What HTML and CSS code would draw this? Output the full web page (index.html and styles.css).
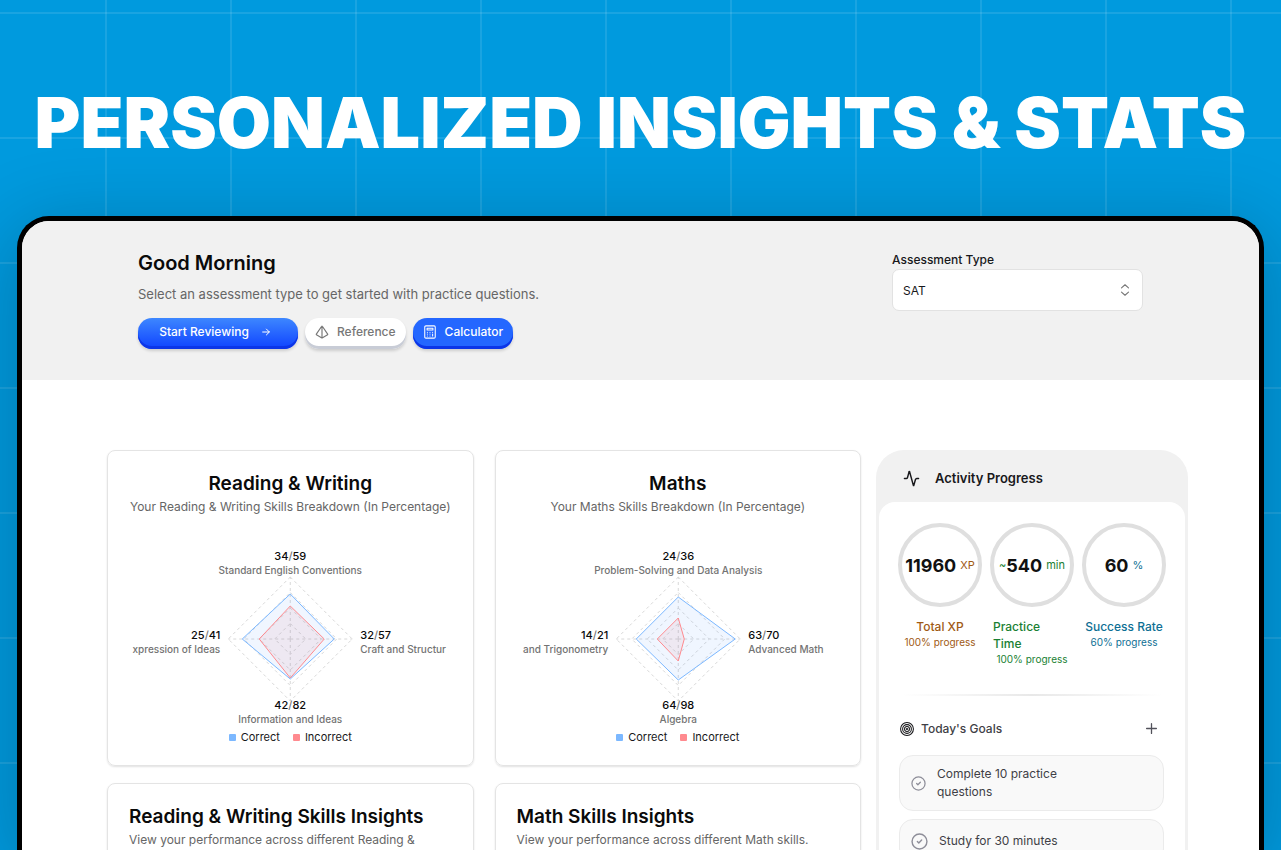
FILE: index.html
```html
<!DOCTYPE html>
<html lang="en">
<head>
<meta charset="utf-8">
<meta name="viewport" content="width=device-width, initial-scale=1">
<title>Personalized Insights &amp; Stats</title>
<link rel="stylesheet" href="styles.css">
</head>
<body>
<div class="page">
  <h1 class="hero">PERSONALIZED INSIGHTS &amp; STATS</h1>
  <main class="device">
    <header class="welcome">
      <div class="welcome-text">
        <h2 class="greeting">Good Morning</h2>
        <p class="lead">Select an assessment type to get started with practice questions.</p>
        <div class="actions">
          <button class="btn btn-start" type="button">Start Reviewing
            <svg class="icon-arrow" viewBox="0 0 24 24" fill="none" stroke="currentColor" stroke-width="2.4" stroke-linecap="round" stroke-linejoin="round"><path d="M4 12h16M13 5l7 7-7 7"/></svg>
          </button>
          <button class="btn btn-reference" type="button">
            <svg class="icon-btn" viewBox="0 0 24 24" fill="none" stroke="currentColor" stroke-width="2" stroke-linecap="round" stroke-linejoin="round"><path d="M2.5 16.9a1 1 0 0 1-.2-1.3l8.9-13a1 1 0 0 1 1.6 0l8.9 13a1 1 0 0 1-.2 1.3l-8.6 4.8a2 2 0 0 1-1.8 0zM12 2v20"/></svg>
            Reference</button>
          <button class="btn btn-calculator" type="button">
            <svg class="icon-btn" viewBox="0 0 24 24" fill="none" stroke="currentColor" stroke-width="1.8" stroke-linecap="round" stroke-linejoin="round"><rect x="3" y="1.500" width="18" height="21" rx="2"/><path d="M7 5.500h10v3H7zM7.500 12.500v.1M12 12.500v.1M16.500 12.500v.1M7.500 15.500v.1M12 15.500v.1M7.500 18.800v.1M12 18.800v.1M16.500 15.500v3.400"/></svg>
            Calculator</button>
        </div>
      </div>
      <div class="field">
        <label class="field-label" for="assessment">Assessment Type</label>
        <div class="select-wrap">
          <select class="select" id="assessment"><option>SAT</option></select>
          <svg class="select-icon" viewBox="0 0 16 16" fill="none" stroke="currentColor" stroke-width="1.3" stroke-linecap="round" stroke-linejoin="round"><path d="M4 5.500 8 2l4 3.500M4 10.500 8 14l4-3.500"/></svg>
        </div>
      </div>
    </header>

    <div class="content">
      <div class="cards">
        <section class="card card-chart">
          <h3 class="card-title">Reading &amp; Writing</h3>
          <p class="card-sub">Your Reading &amp; Writing Skills Breakdown (In Percentage)</p>
          <svg class="radar" viewBox="0 0 322 180" role="img" aria-label="Reading and Writing skills">
            <g class="grid"><path d="M161 32l62 62-62 62-62-62zM161 47.500l46.500 46.500-46.500 46.500-46.500-46.500zM161 63l31 31-31 31-31-31zM161 78.500l15.500 15.500-15.500 15.500-15.500-15.500zM161 94v-62M161 94h62M161 94v62M161 94h-62"/></g>
            <path class="area-correct" d="M161 49 205 94 161 134 113 94z"/>
            <path class="area-incorrect" d="M161 61 195 94 161 133 130 94z"/>
            <g text-anchor="middle">
              <text class="score" x="161" y="15">34<tspan class="slash">/</tspan>59</text><text class="skill" x="161" y="29">Standard English Conventions</text>
              <text class="score" x="161" y="164">42<tspan class="slash">/</tspan>82</text><text class="skill" x="161" y="178">Information and Ideas</text>
            </g>
            <g text-anchor="end"><text class="score" x="91" y="94">25<tspan class="slash">/</tspan>41</text><text class="skill" x="91" y="108">xpression of Ideas</text></g>
            <g><text class="score" x="231" y="94">32<tspan class="slash">/</tspan>57</text><text class="skill" x="231" y="108">Craft and Structur</text></g>
          </svg>
          <div class="legend"><span class="key key-correct">Correct</span><span class="key key-incorrect">Incorrect</span></div>
        </section>

        <section class="card card-chart">
          <h3 class="card-title">Maths</h3>
          <p class="card-sub">Your Maths Skills Breakdown (In Percentage)</p>
          <svg class="radar" viewBox="0 0 322 180" role="img" aria-label="Maths skills">
            <g class="grid"><path d="M161 32l62 62-62 62-62-62zM161 47.500l46.500 46.500-46.500 46.500-46.500-46.500zM161 63l31 31-31 31-31-31zM161 78.500l15.500 15.500-15.500 15.500-15.500-15.500zM161 94v-62M161 94h62M161 94v62M161 94h-62"/></g>
            <path class="area-correct" d="M161 52 218 94 161 135 119 94z"/>
            <path class="area-incorrect" d="M161 73 167 94 161 116 140 94z"/>
            <g text-anchor="middle">
              <text class="score" x="161" y="15">24<tspan class="slash">/</tspan>36</text><text class="skill" x="161" y="29">Problem-Solving and Data Analysis</text>
              <text class="score" x="161" y="164">64<tspan class="slash">/</tspan>98</text><text class="skill" x="161" y="178">Algebra</text>
            </g>
            <g text-anchor="end"><text class="score" x="91" y="94">14<tspan class="slash">/</tspan>21</text><text class="skill" x="91" y="108">and Trigonometry</text></g>
            <g><text class="score" x="231" y="94">63<tspan class="slash">/</tspan>70</text><text class="skill" x="231" y="108">Advanced Math</text></g>
          </svg>
          <div class="legend"><span class="key key-correct">Correct</span><span class="key key-incorrect">Incorrect</span></div>
        </section>

        <section class="card">
          <h3 class="card-title">Reading &amp; Writing Skills Insights</h3>
          <p class="card-sub">View your performance across different Reading &amp;</p>
        </section>
        <section class="card">
          <h3 class="card-title">Math Skills Insights</h3>
          <p class="card-sub">View your performance across different Math skills.</p>
        </section>
      </div>

      <aside class="activity">
        <h3 class="activity-title">
          <svg class="icon-activity" viewBox="0 0 24 24" fill="none" stroke="currentColor" stroke-width="2" stroke-linecap="round" stroke-linejoin="round"><path d="M22 12h-2.500a2 2 0 0 0-1.900 1.500l-2.400 8.300a.25.25 0 0 1-.5 0L9.200 2.200a.25.25 0 0 0-.5 0L6.400 10.500A2 2 0 0 1 4.500 12H2"/></svg>
          Activity Progress</h3>
        <div class="activity-body">
          <div class="stats">
            <div class="stat stat-xp"><div class="ring"><b class="value">11960</b><span class="unit">XP</span></div><span class="stat-name">Total XP</span><span class="stat-progress">100% progress</span></div>
            <div class="stat stat-time"><div class="ring"><span>~</span><b class="value">540</b><span class="unit">min</span></div><span class="stat-name">Practice Time</span><span class="stat-progress">100% progress</span></div>
            <div class="stat stat-rate"><div class="ring"><b class="value">60</b><span class="unit">%</span></div><span class="stat-name">Success Rate</span><span class="stat-progress">60% progress</span></div>
          </div>
          <hr class="divider">
          <div class="goals-head">
            <svg class="icon-target" viewBox="0 0 24 24" fill="none" stroke="currentColor" stroke-width="1.800"><circle cx="12" cy="12" r="11"/><circle cx="12" cy="12" r="7.500"/><circle cx="12" cy="12" r="4.200"/><circle cx="12" cy="12" r="1"/></svg>
            <h4 class="goals-title">Today's Goals</h4>
            <button class="add" type="button" aria-label="Add goal"><svg class="icon-plus" viewBox="0 0 12 12" fill="none" stroke="currentColor" stroke-width="1.200" stroke-linecap="round"><path d="M6 1.500v9M1.500 6h9"/></svg></button>
          </div>
          <ul class="goals">
            <li class="goal"><svg class="icon-check" viewBox="0 0 24 24" fill="none" stroke="currentColor" stroke-width="2" stroke-linecap="round" stroke-linejoin="round"><circle cx="12" cy="12" r="10.500"/><path d="m9 12 2 2 4-4"/></svg><span class="goal-text">Complete 10 practice questions</span></li>
            <li class="goal"><svg class="icon-check icon-check-large" viewBox="0 0 24 24" fill="none" stroke="currentColor" stroke-width="2" stroke-linecap="round" stroke-linejoin="round"><circle cx="12" cy="12" r="10.500"/><path d="m9 12 2 2 4-4"/></svg><span class="goal-text">Study for 30 minutes</span></li>
          </ul>
        </div>
      </aside>
    </div>
  </main>
</div>
</body>
</html>
```
FILE: styles.css
```css
* { box-sizing: border-box; }
body { margin: 0; font-family: Inter, "Liberation Sans", sans-serif; font-size: 12px; color: #18181b; }
h1, h2, h3, h4, p, ul { margin: 0; padding: 0; }
button, select { font: inherit; }
svg { flex-shrink: 0; }

.page {
  display: flex;
  flex-direction: column;
  height: 100vh;
  overflow: hidden;
  background-color: #009ade;
  background-image:
    linear-gradient(90deg, rgba(255, 255, 255, .1) 2px, transparent 2px),
    linear-gradient(rgba(255, 255, 255, .1) 2px, transparent 2px);
  background-size: 125px 125px;
  background-position: 105px 12px;
}
.hero {
  padding: 81px 0 51px;
  font-size: 70px;
  font-weight: 900;
  line-height: 84px;
  text-align: center;
  white-space: nowrap;
  color: #fff;
}
.device {
  flex: 1;
  min-height: 0;
  margin: 0 17px;
  overflow: hidden;
  background: #fff;
  border: 5px solid #000;
  border-bottom: 0;
  border-radius: 32px 32px 0 0;
  box-shadow: 0 16px 80px 8px rgba(0, 0, 0, .2);
}

.welcome {
  display: flex;
  justify-content: space-between;
  padding: 28px 116px 31px;
  background: #f1f1f1;
}
.greeting { font-size: 20px; font-weight: 600; line-height: 28px; color: #0a0a0a; }
.lead { margin-top: 7px; font-size: 13px; line-height: 20px; color: #666; }
.actions { display: flex; gap: 7px; margin-top: 14px; }
.btn {
  display: flex;
  align-items: center;
  justify-content: center;
  gap: 8px;
  height: 31px;
  padding: 0 10px 4px;
  border: 0;
  border-radius: 14px;
  font-weight: 500;
  color: #fff;
}
.btn-start { width: 160px; gap: 12px; padding-right: 16px; background: linear-gradient(#3d87ff, #1349ff 90%); box-shadow: inset 0 -3px #0c35e8, 0 2px 3px rgba(0, 0, 0, .15); }
.btn-reference { background: #fff; color: #777; box-shadow: inset 0 -3px #c8ccd6, 0 2px 3px rgba(0, 0, 0, .15); }
.btn-calculator { background: #2467ff; box-shadow: inset 0 -3px #0c35e8, 0 2px 3px rgba(0, 0, 0, .15); }
.icon-arrow { width: 10px; height: 10px; }
.icon-btn { width: 14px; height: 14px; }

.field { width: 251px; padding-top: 3px; }
.field-label { display: block; font-weight: 500; line-height: 16px; }
.select-wrap { position: relative; margin-top: 1px; }
.select {
  width: 100%;
  height: 42px;
  padding: 0 10px;
  appearance: none;
  border: 1px solid #e2e2e2;
  border-radius: 7px;
  background: #fff;
  color: #18181b;
}
.select-icon { position: absolute; top: 14px; right: 11px; width: 14px; height: 14px; color: #777; pointer-events: none; }

.content {
  display: grid;
  grid-template-columns: 1fr 312px;
  gap: 15px;
  padding: 70px 71px 0 85px;
}
.cards { display: grid; grid-template-columns: 1fr 1fr; align-content: start; gap: 17px 21px; }
.card {
  min-height: 200px;
  padding: 21px 21px 19px;
  border: 1px solid #e4e4e4;
  border-radius: 8px;
  box-shadow: 0 1px 2px rgba(0, 0, 0, .12);
}
.card-chart { text-align: center; }
.card-title { font-size: 19px; font-weight: 600; line-height: 24px; color: #0a0a0a; }
.card-sub { margin-top: 2px; line-height: 18px; color: #666; }
.radar { display: block; width: 100%; height: 180px; margin-top: 29px; }
.grid { fill: none; stroke: #d8d8d8; stroke-width: 1; stroke-dasharray: 3 3; }
.area-correct { fill: #5596ff; fill-opacity: .09; stroke: #7cb8ff; }
.area-incorrect { fill: #e06070; fill-opacity: .09; stroke: #ff8a8f; }
.score { font-size: 11px; font-weight: 500; fill: #0a0a0a; }
.slash { fill: #777; }
.skill { font-size: 10px; font-weight: 500; fill: #737373; }
.legend { display: flex; justify-content: center; gap: 13px; margin-top: 3px; font-size: 11px; line-height: 18px; }
.key { display: flex; align-items: center; gap: 5px; }
.key::before { content: ""; width: 7px; height: 7px; border-radius: 1px; }
.key-correct::before { background: #7cb8ff; }
.key-incorrect::before { background: #ff8a8f; }

.activity { padding: 0 3px; background: #f1f1f1; border-radius: 28px 28px 0 0; }
.activity-title { display: flex; align-items: center; gap: 15px; height: 52px; padding: 4px 24px 0; font-size: 13px; font-weight: 600; }
.icon-activity { width: 17px; height: 17px; }
.activity-body { height: 500px; padding: 21px 19px; background: #fff; border-radius: 16px 16px 0 0; }
.stats { display: grid; grid-template-columns: repeat(3, 84px); justify-content: space-between; }
.stat { display: flex; flex-direction: column; align-items: center; }
.stat-xp { color: #a05a14; }
.stat-time { color: #1a7f33; }
.stat-rate { color: #0e6f94; }
.ring {
  display: flex;
  align-items: center;
  justify-content: center;
  width: 84px;
  height: 84px;
  margin-bottom: 11px;
  border: 4px solid #dfdfdf;
  border-radius: 50%;
  font-size: 11px;
  white-space: nowrap;
}
.value { font-size: 18px; font-weight: 700; color: #111; }
.unit { margin-left: 4px; }
.stat-name { max-width: 78px; font-weight: 500; line-height: 17px; }
.stat-progress { font-size: 10px; line-height: 15px; }
.divider { height: 2px; margin: 27px 4px 23px; border: 0; background: linear-gradient(90deg, transparent, #e8e8e8, transparent); }
.goals-head { display: flex; align-items: center; gap: 7px; padding: 0 8px 0 2px; }
.icon-target { width: 14px; height: 14px; }
.goals-title { flex: 1; font-size: 12px; font-weight: 500; color: #3f3f46; }
.add { display: flex; padding: 3px 0; border: 0; background: none; color: #52525b; }
.icon-plus { width: 13px; height: 13px; }
.goals { display: grid; gap: 8px; margin: 17px 2px 0 1px; list-style: none; }
.goal { display: flex; align-items: center; gap: 11px; min-height: 44px; padding: 9px 11px; border: 1px solid #ebebeb; border-radius: 14px; background: #f9f9f9; }
.goal-text { max-width: 150px; line-height: 18px; color: #3f3f46; }
.icon-check { width: 15px; height: 15px; color: #8e8e99; }
.icon-check-large { width: 17px; height: 17px; }
```
